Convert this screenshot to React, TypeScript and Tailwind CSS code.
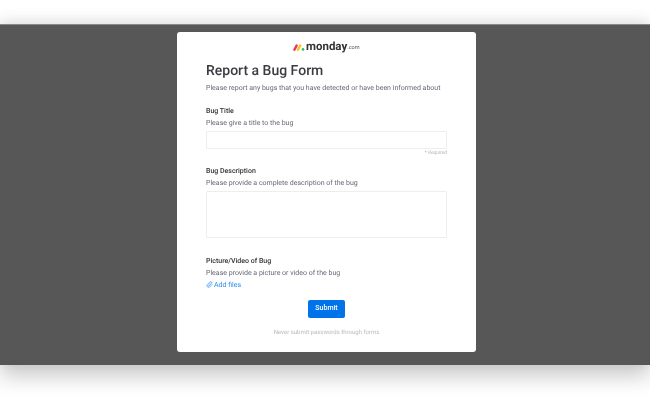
import { Paperclip } from 'lucide-react';

function MondayLogo() {
    return (
        <div className="flex items-center justify-center h-[12px]">
            <svg width="12" height="7" viewBox="0 0 12 7" className="mr-[0.5px]">
                <path d="M1.4 5.7 L3.6 1.6" stroke="#f0364f" strokeWidth="2.4" strokeLinecap="round" />
                <path d="M5 5.7 L7.2 1.6" stroke="#ffc21a" strokeWidth="2.4" strokeLinecap="round" />
                <circle cx="10" cy="5.4" r="1.3" fill="#2fbf67" />
            </svg>
            <span className="text-[11.5px] font-bold text-[#333333] leading-none">monday</span>
            <span className="text-[5.5px] text-[#555555] leading-none mt-[3px]">.com</span>
        </div>
    );
}

function Field({ title, hint }: { title: string; hint: string }) {
    return (
        <div>
            <p className="text-[7px] leading-[12px] font-medium text-[#333333]">{title}</p>
            <p className="text-[7px] leading-[12px] text-[#676879]">{hint}</p>
        </div>
    );
}

export default function App() {
    return (
        <div className="w-[650px] h-[400px] overflow-hidden bg-white pt-[24px] font-['Roboto',sans-serif] [text-rendering:geometricPrecision]">
            <div className="h-[341px] bg-[#575757] border-t border-[#8a8a8a] pt-[7px] pl-[3px] flex justify-center shadow-[0_12px_20px_rgba(0,0,0,0.2),0_-4px_14px_rgba(0,0,0,0.1)]">
                <div className="w-[299px] h-[320px] bg-white rounded-[3px] pt-[9px] pl-[29px] pr-[29px] will-change-transform">
                    <MondayLogo />
                    <h1 className="mt-[8px] text-[14px] leading-[20px] font-medium text-[#3a3b40]">Report a Bug Form</h1>
                    <p className="mt-[0.5px] text-[7px] leading-[12px] text-[#676879]">
                        Please report any bugs that you have detected or have been informed about
                    </p>
                    <div className="mt-[11.5px]">
                        <Field title="Bug Title" hint="Please give a title to the bug" />
                        <div className="mt-[2px] h-[18px] border border-[#eeeeee] rounded-[1px]" />
                        <p className="mt-[1px] text-right text-[5px] leading-[6px] italic text-[#b5b5b5]">* Required</p>
                    </div>
                    <div className="mt-[8.5px]">
                        <Field title="Bug Description" hint="Please provide a complete description of the bug" />
                        <div className="mt-[2px] h-[47.5px] border border-[#eeeeee] rounded-[1px]" />
                    </div>
                    <div className="mt-[16.5px]">
                        <Field title="Picture/Video of Bug" hint="Please provide a picture or video of the bug" />
                        <div className="flex items-center gap-[1px] text-[7px] leading-[12px] text-[#2f8df0]">
                            <Paperclip className="size-[7px]" />
                            <span>Add files</span>
                        </div>
                    </div>
                    <div className="mt-[9px] flex justify-center">
                        <button type="button" className="w-[37px] h-[18px] bg-[#0073ea] rounded-[2px] text-white text-[7px] font-medium">
                            Submit
                        </button>
                    </div>
                    <p className="mt-[10px] text-center text-[6px] leading-[10px] text-[#b8b8b8]">
                        Never submit passwords through forms
                    </p>
                </div>
            </div>
        </div>
    );
}
